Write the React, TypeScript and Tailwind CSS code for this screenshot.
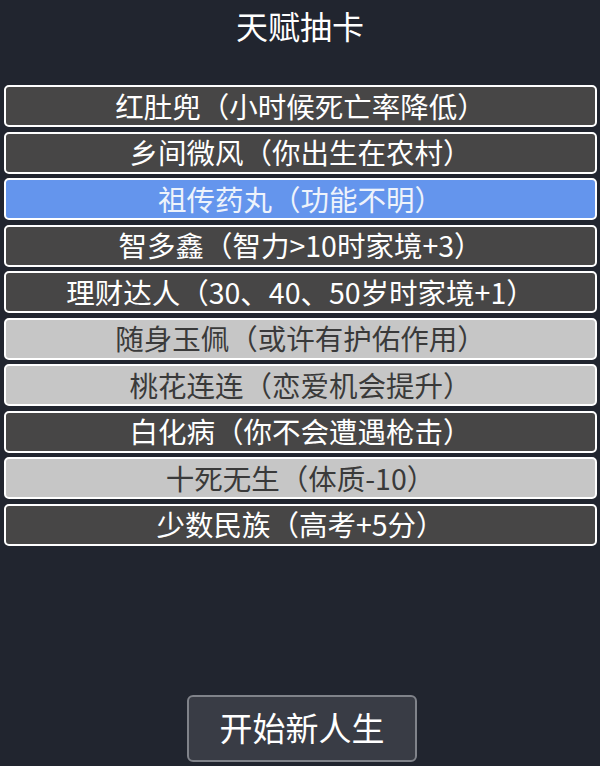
import React from "react";

type Talent = {
  label: string;
  kind: "dark" | "blue" | "light";
};

const talents: Talent[] = [
  { label: "红肚兜（小时候死亡率降低）", kind: "dark" },
  { label: "乡间微风（你出生在农村）", kind: "dark" },
  { label: "祖传药丸（功能不明）", kind: "blue" },
  { label: "智多鑫（智力>10时家境+3）", kind: "dark" },
  { label: "理财达人（30、40、50岁时家境+1）", kind: "dark" },
  { label: "随身玉佩（或许有护佑作用）", kind: "light" },
  { label: "桃花连连（恋爱机会提升）", kind: "light" },
  { label: "白化病（你不会遭遇枪击）", kind: "dark" },
  { label: "十死无生（体质-10）", kind: "light" },
  { label: "少数民族（高考+5分）", kind: "dark" },
];

const kindClass = {
  dark: "bg-[#474646] text-white",
  blue: "bg-[#6495ed] text-[#eef3fb]",
  light: "bg-[#c6c6c6] text-[#3a3a3a]",
};

const App = () => {
  return (
    <div
      className="min-h-[766px] w-[600px] bg-[#21252f] overflow-hidden"
      style={{ fontFamily: '"Noto Sans CJK SC", "Noto Sans", sans-serif' }}
    >
      <h1 className="pt-[1px] text-center text-[32px] leading-[48px] text-white">
        天赋抽卡
      </h1>

      <ul className="mt-[36px] ml-[4px] w-[593px] flex flex-col gap-[4.5px]">
        {talents.map((t) => (
          <li
            key={t.label}
            className={`h-[42px] flex items-center justify-center rounded-[5px] border-2 border-white text-[28.5px] leading-none ${kindClass[t.kind]}`}
          >
            {t.label}
          </li>
        ))}
      </ul>

      <div className="mt-[149px] flex justify-center pl-[4px]">
        <button className="w-[230px] h-[67px] rounded-[6px] border-2 border-[#80838a] bg-[#393c45] text-[33px] text-white">
          开始新人生
        </button>
      </div>
    </div>
  );
};

export default App;
